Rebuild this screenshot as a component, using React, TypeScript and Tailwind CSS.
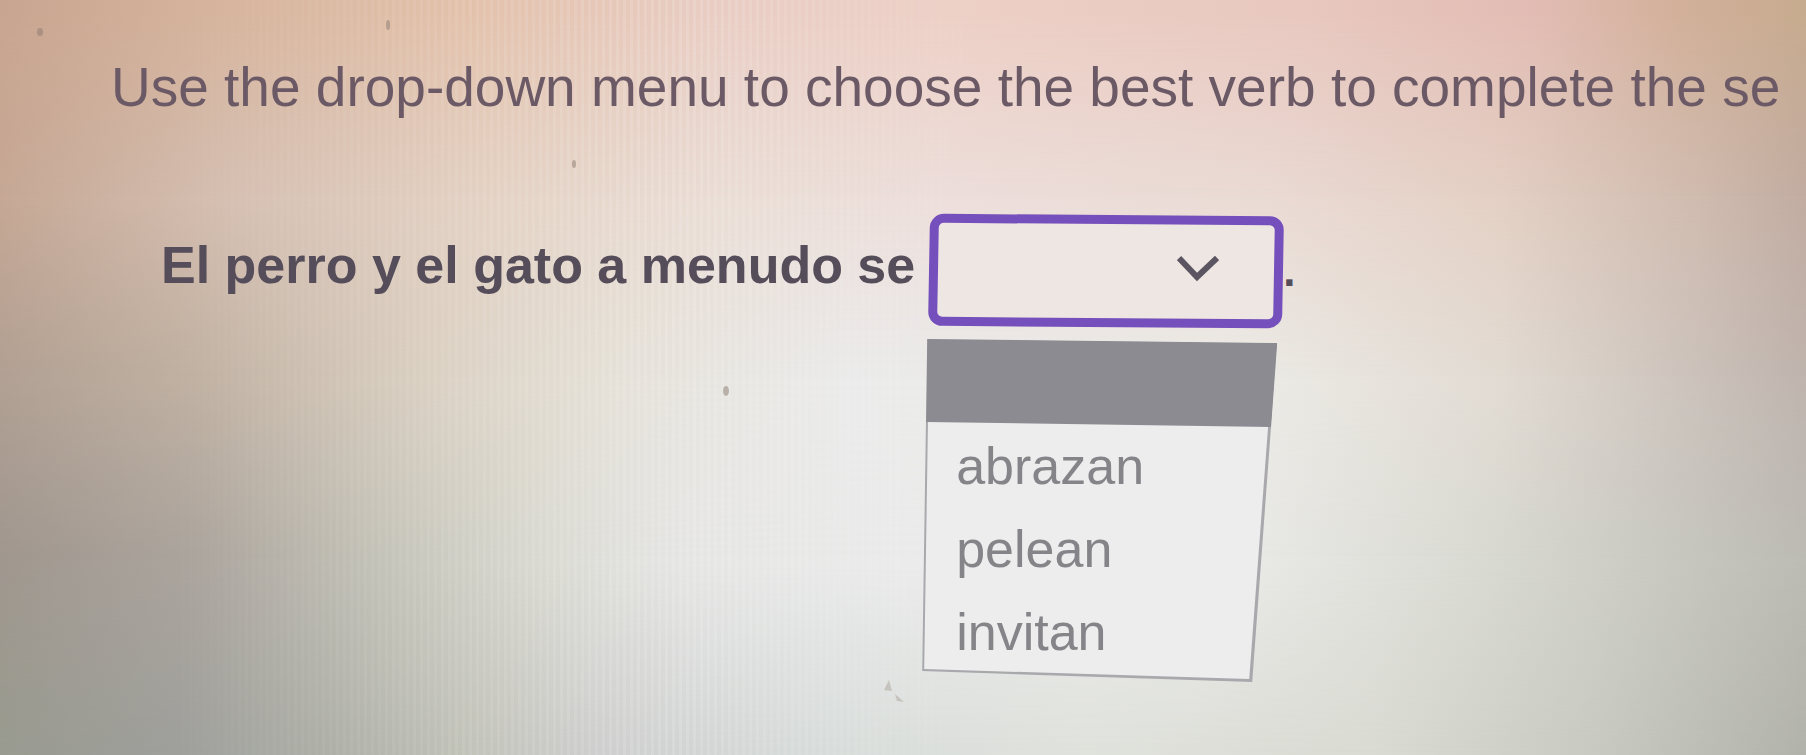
const options = ["abrazan", "pelean", "invitan"];

function Backdrop() {
  return (
    <div aria-hidden="true" className="pointer-events-none absolute inset-0 -z-10">
      <div className="absolute inset-0 bg-[linear-gradient(90deg,#999b90_0%,#9fa09c_10%,#aeb0a8_18%,#c2c3b9_26%,#cecece_33%,#d8dddb_46%,#e0e2dc_60%,#dadbd3_76%,#c9cbc2_88%,#b2b3aa_100%)]" />
      <div className="absolute inset-0 bg-[linear-gradient(90deg,#a0978f_0%,#aca59e_11%,#c4c3b9_21%,#dadad2_30%,#e6e6e5_38%,#ebebeb_50%,#ededeb_66%,#d9dad2_82%,#bcbbb4_100%)] [mask-image:linear-gradient(180deg,black_74%,transparent_100%)]" />
      <div className="absolute inset-0 bg-[linear-gradient(90deg,#b1a093_0%,#c1b2a3_11%,#dbd1c3_24%,#e5e1d8_34%,#ebebeb_47%,#ecebe6_69%,#e2dbd3_83%,#bfb4ae_100%)] [mask-image:linear-gradient(180deg,black_50%,transparent_74%)]" />
      <div className="absolute inset-0 bg-[linear-gradient(90deg,#c6a895_0%,#d6c0b3_13%,#e4d2c4_27%,#eaddd5_40%,#eddedb_52%,#eadad4_70%,#e4d0c4_83%,#d0bbaf_94%,#c2aca1_100%)] [mask-image:linear-gradient(180deg,black_26%,transparent_50%)]" />
      <div className="absolute inset-0 bg-[linear-gradient(90deg,#c8a590_0%,#d6b49d_12%,#e3c2ac_26%,#e9cdc4_40%,#edd0c6_52%,#e8c8bf_72%,#e2bcb4_85%,#d2b09a_93%,#c7ab8f_100%)] [mask-image:linear-gradient(180deg,black_2%,transparent_26%)]" />
      <div className="absolute inset-0 bg-[repeating-linear-gradient(90deg,rgba(255,255,255,0.14)_0_3px,transparent_3px_7px)] [mask-image:linear-gradient(90deg,transparent_8%,black_38%,transparent_56%)]" />
      <svg
        className="absolute inset-0 h-full w-full"
        viewBox="0 0 1806 755"
        preserveAspectRatio="none"
        fill="#8a7a72"
        fillOpacity="0.5"
      >
        <ellipse cx="40" cy="32" rx="3" ry="4" />
        <ellipse cx="388" cy="25" rx="2" ry="5" />
        <ellipse cx="574" cy="164" rx="2" ry="4" />
        <ellipse cx="726" cy="391" rx="3" ry="5" />
        <path d="M889 680 L884 690 L892 691 Z M895 694 L904 702 L897 701 Z" fillOpacity="0.3" />
      </svg>
    </div>
  );
}

function VerbMenu() {
  return (
    <div className="absolute top-full -left-[7px] mt-3 w-[355px]">
      <div
        aria-hidden="true"
        className="absolute inset-0 bg-[#a9a9ad] [clip-path:polygon(5px_0,100%_4px,330px_100%,0_332px)]"
      >
        <div className="absolute inset-0 bg-[#ededed] [clip-path:polygon(7px_2px,352px_6px,327px_340px,2px_330px)]" />
        <div className="absolute inset-0 bg-[#8c8b92] [clip-path:polygon(5px_0,100%_4px,349px_88px,4px_83px)]" />
      </div>
      <ul role="listbox" aria-label="Verbs" className="relative pb-2">
        <li role="option" aria-selected="true" aria-label="blank" className="h-[86px]" />
        {options.map((option) => (
          <li key={option} role="option" aria-selected="false">
            <button
              type="button"
              className="block h-[83px] w-full pl-[34px] text-left text-[52px] leading-[83px] text-[#858589]"
            >
              {option}
            </button>
          </li>
        ))}
      </ul>
    </div>
  );
}

export default function App() {
  return (
    <main className="relative isolate min-h-screen overflow-hidden font-['Liberation_Sans',Arial,sans-serif]">
      <Backdrop />
      <p className="pt-[55px] pl-[111px] text-[55px] leading-[64px] whitespace-nowrap text-[#6b5a66]">
        Use the drop-down menu to choose the best verb to complete the se
      </p>
      <div className="mt-24 flex items-center pl-[161px] text-[52px] leading-[60px] font-bold whitespace-nowrap text-[#554d5a]">
        <label htmlFor="verb" className="pb-3">
          El perro y el gato a menudo se
        </label>
        <div className="relative ml-3.5 font-normal">
          <select
            id="verb"
            defaultValue=""
            className="block h-28 w-[354px] skew-y-[0.4deg] -skew-x-1 appearance-none rounded-[14px] border-[9px] border-[#754fbb] bg-[#eee6e3] outline-none"
          >
            <option value="" />
            {options.map((option) => (
              <option key={option} value={option}>
                {option}
              </option>
            ))}
          </select>
          <svg
            aria-hidden="true"
            viewBox="0 0 42 28"
            className="pointer-events-none absolute top-10 right-16 h-7 w-[42px]"
            fill="none"
            stroke="#5a5560"
            strokeWidth="6"
          >
            <path d="M2 3 L20 22 L40 3" />
          </svg>
          <VerbMenu />
        </div>
        <span className="text-[44px]">.</span>
      </div>
    </main>
  );
}
